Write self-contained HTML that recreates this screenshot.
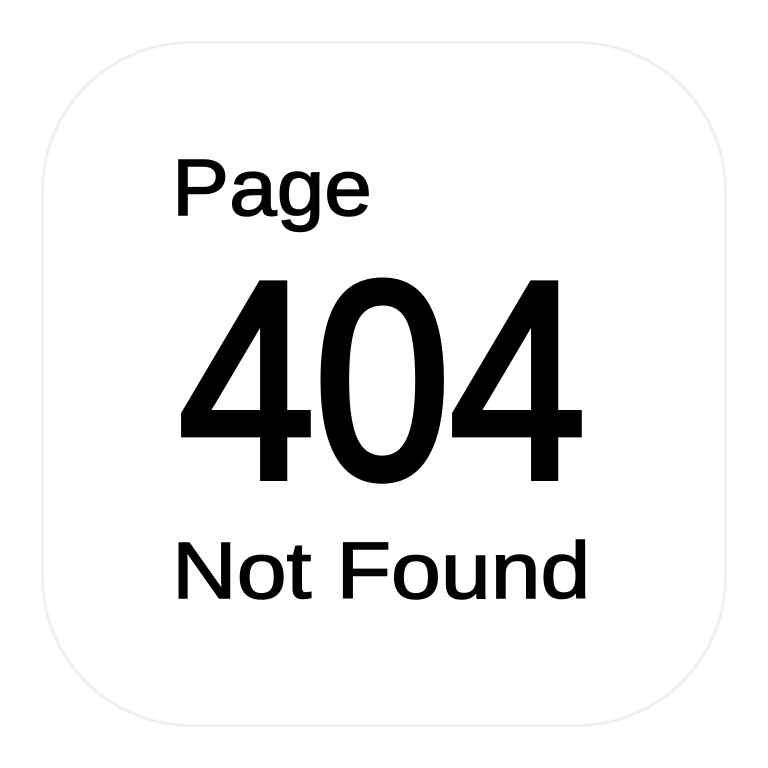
<!DOCTYPE html>
<html><head><style>
html,body{margin:0;padding:0;background:#fff;width:768px;height:768px;overflow:hidden}
.card{position:absolute;left:41px;top:41px;width:680px;height:680px;border:3px solid #f0f0f0;border-radius:150px;background:#fff}
.t{position:absolute;font-family:"Liberation Sans",sans-serif;color:#000;white-space:nowrap;transform-origin:left top;line-height:1}
</style></head><body>
<div class="card"></div>
<div class="t" style="left:172px;top:148px;font-size:80px;transform:scaleX(1.07);-webkit-text-stroke:1.5px #000">Page</div>
<div class="t" style="left:179px;top:241px;font-size:280px;transform:scaleX(0.87);-webkit-text-stroke:8px #000">404</div>
<div class="t" style="left:172px;top:531px;font-size:80px;transform:scaleX(1.12);-webkit-text-stroke:1.5px #000">Not Found</div>
</body></html>
